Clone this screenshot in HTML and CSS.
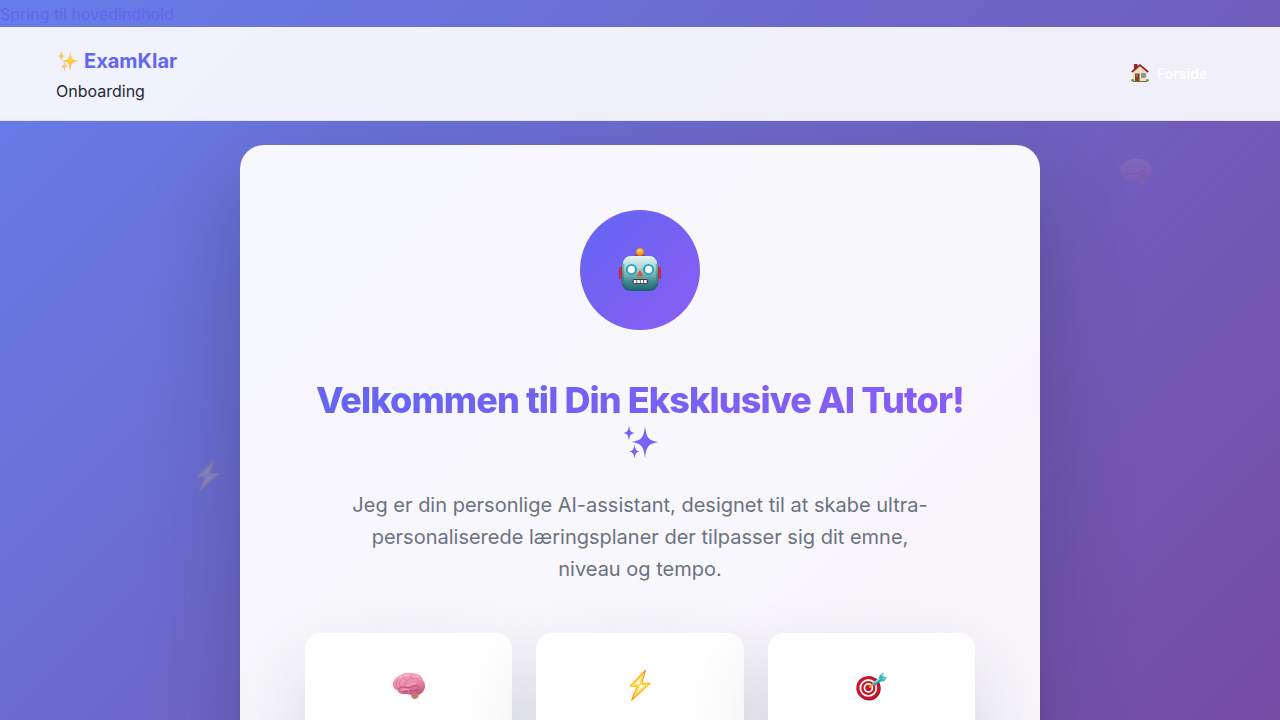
FILE: index.html
```
<!DOCTYPE html>
<html lang="da">
<head>
<meta charset="utf-8">
<title>ExamKlar - Onboarding</title>
<link rel="stylesheet" href="styles.css">
</head>
<body>
<svg class="defs" width="0" height="0" aria-hidden="true">
  <defs>
    <linearGradient id="gold" x1="0" y1="0" x2="0" y2="1"><stop offset="0" stop-color="#ffd84d"/><stop offset="1" stop-color="#ffc226"/></linearGradient>
    <linearGradient id="title-ink" gradientUnits="userSpaceOnUse" x1="0" y1="0" x2="36" y2="36"><stop offset="0" stop-color="#7764f3"/><stop offset="1" stop-color="#7b60f4"/></linearGradient>
    <linearGradient id="brain-fill" x1="0" y1="0" x2=".3" y2="1"><stop offset="0" stop-color="#f7b0c4"/><stop offset=".6" stop-color="#eb89a9"/><stop offset="1" stop-color="#c45c80"/></linearGradient>
    <linearGradient id="bolt-fill" x1="0" y1="0" x2="0" y2="1"><stop offset="0" stop-color="#ff8f0a"/><stop offset=".5" stop-color="#ffbd12"/><stop offset="1" stop-color="#ff8d10"/></linearGradient>
    <linearGradient id="face" x1="0" y1="0" x2="0" y2="1"><stop offset="0" stop-color="#e4f4f3"/><stop offset=".4" stop-color="#a9cfd0"/><stop offset=".75" stop-color="#448d95"/><stop offset="1" stop-color="#236d77"/></linearGradient>
    <radialGradient id="knob" cx=".45" cy=".3" r=".7"><stop offset="0" stop-color="#ffdf70"/><stop offset=".5" stop-color="#fca51f"/><stop offset="1" stop-color="#d96a08"/></radialGradient>
    <symbol id="sparkles" viewBox="0 0 36 36">
      <path d="M22 2C23.300 12.500 24.500 16.300 35.500 18C24.500 19.700 23.300 23.500 22 34C20.700 23.500 19.500 19.700 8.500 18C19.500 16.300 20.700 12.500 22 2Z"/>
      <path d="M6 1.500C6.900 6.700 7.300 8 11.500 9C7.300 10 6.900 11.300 6 16.500C5.100 11.300 4.700 10 .5 9C4.700 8 5.100 6.700 6 1.500Z"/>
      <path d="M11.500 20.500C12.400 25.500 12.800 26.700 17 27.600C12.800 28.500 12.400 29.500 11.500 34.500C10.600 29.500 10.200 28.500 6 27.600C10.200 26.700 10.600 25.500 11.500 20.500Z"/>
    </symbol>
    <symbol id="brain" viewBox="0 0 34 28">
      <path d="M1 14C0 9 3 6 7 4C10 1 15 0 20 1C26 1 30 4 31 8C34 12 33.500 16 31.500 19C30 22 26 24 21 23.500C18 22.500 16 22 13 22C9 22.500 6 21 5.500 18C3 18 1.500 16 1 14Z" fill="url(#brain-fill)"/>
      <path d="M19 23Q20 20.500 23 20.500Q27 21 26.500 24.500Q24.500 28.500 20 26Z" fill="#c8776f"/>
      <path d="M4 14Q3 9 7 7M8 14Q6 9 11 6M11 4Q12 8 15 9M13 12Q15 6 20 6M18 3Q18 7 23 7M27 5Q24 8 27 11M20 12Q24 9 28 13M30 10Q32 13 29 17" fill="none" stroke="#d9739a" stroke-width=".8" stroke-linecap="round"/>
      <path d="M6 17Q9 14 13 15Q18 17 22 14Q25 12 27 16M12 20Q17 17 21 19Q25 19 27 17" fill="none" stroke="#b84d74" stroke-width="1" stroke-linecap="round"/>
      <path d="M8 6Q13 2 18 3M22 4Q26 3 28 7M15 14Q20 11 24 11M9 18Q13 16 17 18" fill="none" stroke="#ffd0dc" stroke-width=".7" stroke-linecap="round"/>
    </symbol>
    <symbol id="bolt" viewBox="0 0 24 34">
      <path d="M17.500 1.500L1.800 17.600L9.300 17.800L3.500 32L22.300 14.700L14 14.500Z" fill="#fff3a8" stroke="url(#bolt-fill)" stroke-width="1.300" stroke-linejoin="round"/>
      <path d="M15 6L5 16.300L11.500 16.500L7.500 26.500L18.500 16L11.800 15.700Z" fill="#fffbe0" stroke="#ffd22e" stroke-width="1"/>
    </symbol>
    <symbol id="target" viewBox="0 0 34 30">
      <ellipse cx="14" cy="17" rx="12" ry="12.500" fill="#8e1220"/>
      <ellipse cx="13" cy="16.500" rx="12.300" ry="12.200" fill="#c9152a"/>
      <circle cx="13.200" cy="16.500" r="9.200" fill="#fff"/>
      <circle cx="13.200" cy="16.500" r="7.300" fill="#c9152a"/>
      <circle cx="13.300" cy="16.500" r="5" fill="#fff"/>
      <circle cx="13.300" cy="16.500" r="3.200" fill="#c9152a"/>
      <path d="M14 16L18.500 12" stroke="#e7a523" stroke-width="2"/>
      <path d="M17.500 11L24 6.500L25 3L29 .5L28.500 4.500L32.500 6L29.500 9.500L26 9.500L20 14Z" fill="#35b5bf"/>
      <path d="M18.500 11.500L25 7M27 4.500L28 2M28 7L31 6.500" stroke="#8fe7e9" stroke-width="1.200"/>
      <path d="M20 13.700L26 9.300" stroke="#16727f" stroke-width="1"/>
    </symbol>
    <symbol id="robot" viewBox="0 0 46 46">
      <rect x="1" y="20" width="6" height="13" rx="2" fill="#c92b39"/><rect x="39" y="20" width="6" height="13" rx="2" fill="#c92b39"/>
      <path d="M17 10Q18 7 23 7Q28 7 29 10Z" fill="#54406f"/>
      <circle cx="23" cy="5" r="4.200" fill="url(#knob)"/>
      <rect x="4" y="9.500" width="38" height="36" rx="9" fill="#1c6371"/>
      <rect x="4.700" y="9" width="36.600" height="34.800" rx="8.500" fill="url(#face)"/>
      <path d="M6 17V35Q6 42 14 42H32Q40 42 40 35V17" fill="none" stroke="#277681" stroke-width="1" opacity=".6"/>
      <circle cx="14" cy="23" r="4.800" fill="#fff" stroke="#13a5c6" stroke-width="2"/>
      <circle cx="32" cy="23" r="4.800" fill="#fff" stroke="#13a5c6" stroke-width="2"/>
      <path d="M23 23L26.300 30H19.700Z" fill="#dd4d47"/>
      <rect x="15" y="33" width="16.500" height="5" rx="2.500" fill="#443c3c"/>
      <path d="M16.500 35.500H30" stroke="#fff" stroke-width="3.200" stroke-dasharray="2.700 .9"/>
    </symbol>
    <symbol id="house" viewBox="0 0 18 18">
      <path d="M3 0H6.500V6H3Z" fill="#9e2325"/>
      <path d="M9 1.500L16 8V17H2V8Z" fill="#f4dfb8"/>
      <path d="M.8 8L9 1.200L17.200 8" fill="none" stroke="#8f262b" stroke-width="1.700"/>
      <rect x="4" y="9.500" width="4.600" height="7.500" fill="#85452b"/>
      <rect x="5.200" y="10.500" width="1.400" height="2" fill="#639bc5"/>
      <rect x="10.500" y="9.500" width="3.800" height="3.800" fill="#4ca4e8" stroke="#9c6b45" stroke-width=".5"/>
      <path d="M2 17.500H16" stroke="#666b42" stroke-width="1"/>
      <circle cx="1.500" cy="16.300" r="1.300" fill="#5f9b38"/><circle cx="16.500" cy="16.300" r="1.300" fill="#5f9b38"/>
    </symbol>
  </defs>
</svg>
<a class="skip-link" href="#main">Spring til hovedindhold</a>
<header class="site-header">
  <div class="brand">
    <a class="brand-name" href="#"><svg class="brand-icon"><use href="#sparkles"/></svg>ExamKlar</a>
    <span class="brand-page">Onboarding</span>
  </div>
  <a class="home-button" href="#"><svg class="home-icon"><use href="#house"/></svg><span>Forside</span></a>
</header>
<main id="main" class="stage">
  <svg class="floating floating-brain"><use href="#brain"/></svg>
  <section class="card">
    <div class="avatar"><svg class="robot"><use href="#robot"/></svg></div>
    <h1 class="title"><span class="title-text">Velkommen til Din Eksklusive AI Tutor!</span><svg class="title-icon"><use href="#sparkles"/></svg></h1>
    <p class="intro">Jeg er din personlige AI-assistant, designet til at skabe ultra-personaliserede læringsplaner der tilpasser sig dit emne, niveau og tempo.</p>
    <div class="features">
      <div class="feature"><svg class="icon-brain"><use href="#brain"/></svg></div>
      <div class="feature"><svg class="icon-bolt"><use href="#bolt"/></svg></div>
      <div class="feature"><svg class="icon-target"><use href="#target"/></svg></div>
    </div>
  </section>
  <svg class="floating floating-bolt"><use href="#bolt"/></svg>
</main>
</body>
</html>
```
FILE: styles.css
```
* { box-sizing: border-box; }
html { height: 720px; overflow: hidden; }
body {
  display: flex;
  flex-direction: column;
  margin: 0;
  height: 720px;
  overflow: hidden;
  font: 16px/1.7 Inter, sans-serif;
  color: #1f2937;
  background: linear-gradient(135deg, #667eea 0%, #764ba2 100%) 0 0 / 1280px 740px;
}
a { text-decoration: none; }
svg { display: block; flex: none; }
.defs { position: absolute; }
.skip-link { flex: none; height: 27px; padding-top: 1px; color: #6366f1; }
.site-header {
  position: relative;
  z-index: 1;
  display: flex;
  flex: none;
  align-items: center;
  justify-content: space-between;
  height: 94px;
  padding: 0 56px;
  background: rgba(255, 255, 255, .9);
  border-bottom: 1px solid rgba(99, 102, 241, .1);
}
.brand { display: flex; flex-direction: column; padding-top: 2px; }
.brand-name {
  display: flex;
  align-items: center;
  gap: 4px;
  font-size: 20px;
  font-weight: 700;
  color: #6366f1;
}
.brand-icon { width: 22px; height: 20px; margin: 0 1px; fill: url(#gold); stroke: #f5a96a; stroke-width: .6; }
.home-button {
  display: flex;
  align-items: center;
  gap: 8px;
  width: 110px;
  height: 42px;
  padding-left: 16px;
  color: #fff;
  font-size: 14px;
  font-weight: 600;
  border: 1px solid rgba(255, 255, 255, .2);
  border-radius: 12px;
}
.home-icon { width: 18px; height: 18px; margin-top: -2px; }
.stage { position: relative; flex: 1; min-height: 0; padding-top: 24px; overflow: hidden; }
.card {
  position: relative;
  width: 800px;
  height: 800px;
  margin: 0 auto;
  padding: 65px 65px 0;
  border-radius: 24px;
  background: rgba(255, 255, 255, .95);
  box-shadow: 0 40px 90px rgba(31, 41, 55, .3);
}
.avatar {
  display: flex;
  align-items: center;
  justify-content: center;
  width: 120px;
  height: 120px;
  margin: 0 auto 48px;
  border-radius: 50%;
  background: linear-gradient(135deg, #6366f1, #8b5cf6);
}
.robot { width: 44px; height: 45px; margin-top: -2px; }
.title {
  display: flex;
  flex-direction: column;
  align-items: center;
  height: 87px;
  margin: 0 0 24px;
  padding-top: 1px;
  font-size: 36px;
  font-weight: 800;
  line-height: 43.2px;
  letter-spacing: -.9px;
  white-space: nowrap;
}
.title-text {
  color: transparent;
  background: linear-gradient(135deg, #6366f1, #8b5cf6);
  -webkit-background-clip: text;
  background-clip: text;
}
.title-icon { width: 36px; height: 36px; margin: 2px 0 0 2px; fill: url(#title-ink); }
.intro {
  width: 600px;
  margin: 0 auto 48px;
  color: #6b7280;
  font-size: 20px;
  line-height: 32px;
  text-align: center;
}
.features { display: grid; grid-template-columns: repeat(3, 1fr); gap: 24px; }
.feature {
  display: flex;
  justify-content: center;
  height: 220px;
  padding-top: 36px;
  border-radius: 16px;
  background: rgba(255, 255, 255, .9);
  box-shadow: 0 35px 80px rgba(31, 41, 55, .16);
}
.icon-brain { width: 34px; height: 28px; margin-top: 3px; }
.icon-bolt { width: 24px; height: 33px; }
.icon-target { width: 34px; height: 29px; margin: 3px 0 0 1px; }
.floating { position: absolute; opacity: .13; }
.floating-brain { left: 1119px; top: 37px; width: 34px; height: 28px; }
.floating-bolt { left: 196px; top: 338px; width: 24px; height: 34px; opacity: .17; }
```
